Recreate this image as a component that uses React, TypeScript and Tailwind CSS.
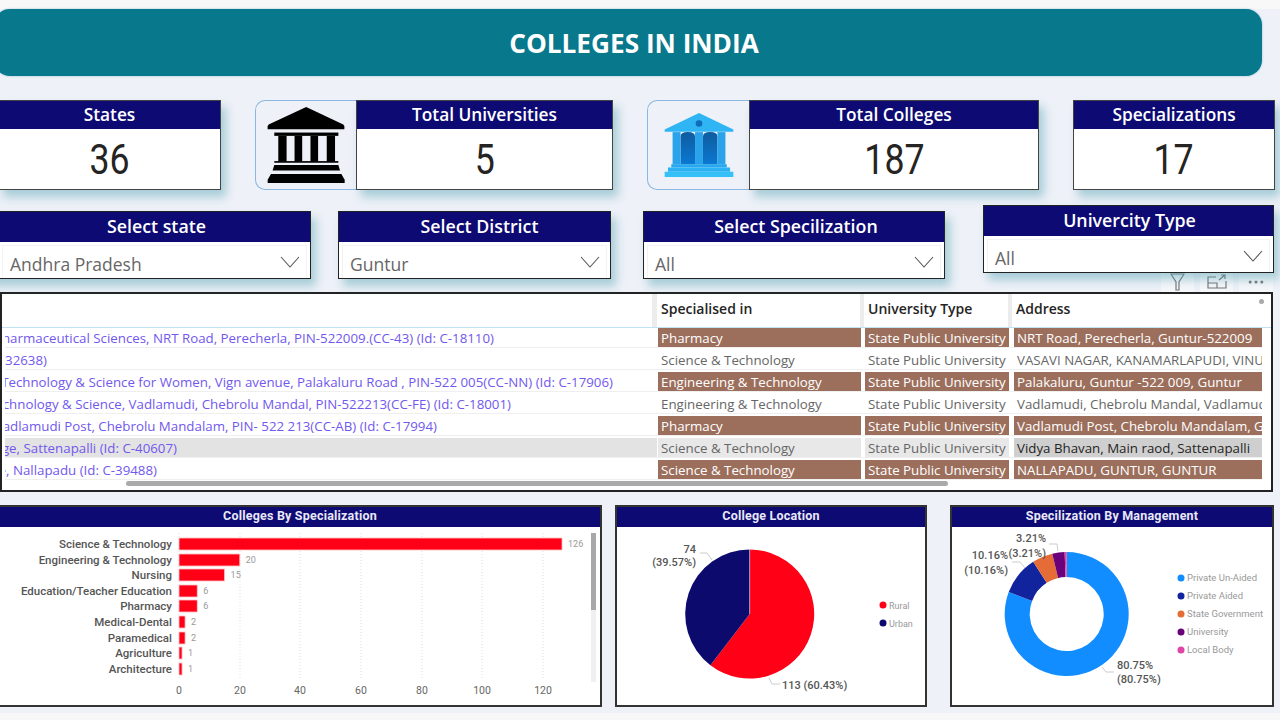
import { MoreHorizontal } from 'lucide-react';

const kpiShadow = 'shadow-[5px_7px_9px_rgba(80,160,175,0.45)]';

const rows = [
  { text: 'Pharmaceutical Sciences, NRT Road, Perecherla, PIN-522009.(CC-43) (Id: C-18110)', end: 'pr-[163px]', spec: 'Pharmacy', address: 'NRT Road, Perecherla, Guntur-522009', tone: 'brown' },
  { text: '(Id: C-32638)', end: 'pr-[610px]', spec: 'Science & Technology', address: 'VASAVI NAGAR, KANAMARLAPUDI, VINUKONDA', tone: 'plain' },
  { text: 'Technology & Science for Women, Vign avenue, Palakaluru Road , PIN-522 005(CC-NN) (Id: C-17906)', end: 'pr-[44px]', spec: 'Engineering & Technology', address: 'Palakaluru, Guntur -522 009, Guntur', tone: 'brown' },
  { text: 'Technology & Science, Vadlamudi, Chebrolu Mandal, PIN-522213(CC-FE) (Id: C-18001)', end: 'pr-[146px]', spec: 'Engineering & Technology', address: 'Vadlamudi, Chebrolu Mandal, Vadlamudi', tone: 'plain' },
  { text: 'Vadlamudi Post, Chebrolu Mandalam, PIN- 522 213(CC-AB) (Id: C-17994)', end: 'pr-[220px]', spec: 'Pharmacy', address: 'Vadlamudi Post, Chebrolu Mandalam, Guntur', tone: 'brown' },
  { text: 'College, Sattenapalli (Id: C-40607)', end: 'pr-[480px]', spec: 'Science & Technology', address: 'Vidya Bhavan, Main raod, Sattenapalli', tone: 'hover' },
  { text: 'College, Nallapadu (Id: C-39488)', end: 'pr-[500px]', spec: 'Science & Technology', address: 'NALLAPADU, GUNTUR, GUNTUR', tone: 'brown' },
];

const bars = [
  { name: 'Science & Technology', value: 126, y: 544 },
  { name: 'Engineering & Technology', value: 20, y: 560 },
  { name: 'Nursing', value: 15, y: 575 },
  { name: 'Education/Teacher Education', value: 6, y: 591 },
  { name: 'Pharmacy', value: 6, y: 606 },
  { name: 'Medical-Dental', value: 2, y: 622 },
  { name: 'Paramedical', value: 2, y: 638 },
  { name: 'Agriculture', value: 1, y: 653 },
  { name: 'Architecture', value: 1, y: 669 },
];

// slice path, angles in percent going clockwise from the top
function slice(cx: number, cy: number, r: number, inner: number, from: number, to: number) {
  const pt = (rad: number, p: number) => {
    const a = (p / 100) * Math.PI * 2;
    return `${(cx + rad * Math.sin(a)).toFixed(2)} ${(cy - rad * Math.cos(a)).toFixed(2)}`;
  };
  const large = to - from > 50 ? 1 : 0;
  if (inner === 0) return `M${cx} ${cy} L${pt(r, from)} A${r} ${r} 0 ${large} 1 ${pt(r, to)} Z`;
  return `M${pt(r, from)} A${r} ${r} 0 ${large} 1 ${pt(r, to)} L${pt(inner, to)} A${inner} ${inner} 0 ${large} 0 ${pt(inner, from)} Z`;
}

function Kpi({ title, value, className }: { title: string; value: string; className: string }) {
  return (
    <div className={`flex flex-col border-[1.5px] border-[#444] bg-white ${kpiShadow} ${className}`}>
      <div className="h-[28px] bg-[#0d0a73] text-center text-[17.3px] font-semibold leading-[27px] text-white">{title}</div>
      <div className="h-[59px] pt-[3px] text-center font-['Roboto',sans-serif] text-[42px] leading-[56px] text-[#252423]">
        <span className="inline-block scale-x-[0.85]">{value}</span>
      </div>
    </div>
  );
}

function Slicer({ title, value, className, titleClass }: { title: string; value: string; className: string; titleClass: string }) {
  return (
    <div className={`relative z-10 flex h-[68px] flex-col border-[1.5px] border-[#222] bg-white ${kpiShadow} ${className}`}>
      <div className={`h-[30px] bg-[#0d0a73] text-center text-[17.8px] font-semibold leading-[29px] text-white ${titleClass}`}>{title}</div>
      <div className="m-[3px] mb-0 flex flex-1 items-center justify-between border border-b-0 border-[#f3f3f3] pl-[7px] pr-[6px]">
        <span className="mt-[4px] text-[17.5px] leading-[24px] text-[#666]">{value}</span>
        <svg width="20" height="12" viewBox="0 0 20 12" fill="none" stroke="#555" strokeWidth="1.1">
          <polyline points="1,1 10,11 19,1" />
        </svg>
      </div>
    </div>
  );
}

function BankIcon() {
  return (
    <svg width="78" height="78" viewBox="50 30 235 235" fill="#000">
      <path d="M168 33 L280 86 Q285 90 283 100 L52 100 Q50 90 55 86 Z" />
      <rect x="72" y="110" width="193" height="10" />
      <rect x="84" y="120" width="25" height="78" />
      <rect x="133" y="120" width="23" height="78" />
      <rect x="181" y="120" width="23" height="78" />
      <rect x="230" y="120" width="25" height="78" />
      <rect x="72" y="196" width="193" height="5" />
      <path d="M72 208 L265 208 L270 224 L67 224 Z" />
      <path d="M62 235 L274 235 L284 252 L284 262 L52 262 L52 252 Z" />
    </svg>
  );
}

function CollegeIcon() {
  return (
    <svg width="70" height="66" viewBox="66 48 212 198">
      <defs>
        <linearGradient id="door" x1="0" y1="0" x2="0" y2="1">
          <stop offset="0" stopColor="#0f5c9e" />
          <stop offset="1" stopColor="#0a78d2" />
        </linearGradient>
      </defs>
      <path d="M172 50 L276 100 L276 107 L68 107 L68 100 Z" fill="#2fb4f4" />
      <circle cx="172" cy="82" r="10" fill="#0f6cb8" />
      <path d="M116 205 L116 122 Q116 108 138 108 Q160 108 160 122 L160 205 Z" fill="url(#door)" />
      <path d="M184 205 L184 122 Q184 108 206 108 Q228 108 228 122 L228 205 Z" fill="url(#door)" />
      <rect x="92" y="108" width="24" height="97" fill="#2ba3ea" />
      <rect x="160" y="108" width="24" height="97" fill="#2ba3ea" />
      <rect x="228" y="108" width="24" height="97" fill="#2ba3ea" />
      <rect x="88" y="205" width="168" height="10" fill="#28a8ee" />
      <rect x="78" y="215" width="188" height="13" fill="#2cb2f2" />
      <rect x="68" y="228" width="208" height="16" fill="#35c0f8" />
    </svg>
  );
}

function ChartCard({ title, className, viewBox, width, children }: { title: string; className: string; viewBox: string; width: number; children: React.ReactNode }) {
  return (
    <div className={`flex h-[202px] flex-col border-2 border-[#333] bg-white ${className}`}>
      <div className="h-[20px] shrink-0 bg-[#0d0a73] text-center font-['Roboto',sans-serif] text-[12.5px] font-bold leading-[18px] tracking-[0.2px] text-[#e8e8f8]">{title}</div>
      <svg width={width} height="178" viewBox={viewBox} className="font-['Roboto',sans-serif]">
        {children}
      </svg>
    </div>
  );
}

export default function App() {
  return (
    <div className="flex h-[720px] w-[1280px] flex-col overflow-hidden bg-[#eef1f8] font-['Open_Sans',sans-serif]">
      <div className="h-[9px] bg-[#f8f8f8]" />

      {/* Title banner */}
      <div className="-ml-[6px] flex h-[67px] w-[1268px] shrink-0 items-center justify-center rounded-[16px] bg-[#08788c] shadow-[0_0_2px_rgba(60,140,180,0.6)]">
        <h1 className="ml-[12px] mt-[3px] text-[26.2px] font-bold text-white">COLLEGES IN INDIA</h1>
      </div>

      {/* KPI row */}
      <div className="mt-[24px] flex h-[90px] shrink-0">
        <Kpi title="States" value="36" className="-ml-[2px] w-[223px]" />
        <div className="ml-[34px] flex w-[101px] items-center justify-center rounded-l-[10px] border border-r-0 border-[#8ab8e2]">
          <BankIcon />
        </div>
        <Kpi title="Total Universities" value="5" className="w-[257px]" />
        <div className="ml-[34px] flex w-[102px] items-center justify-center rounded-l-[10px] border border-r-0 border-[#8ab8e2]">
          <CollegeIcon />
        </div>
        <Kpi title="Total Colleges" value="187" className="w-[290px]" />
        <Kpi title="Specializations" value="17" className="ml-[34px] w-[202px]" />
      </div>

      {/* Slicers */}
      <div className="mt-[15px] flex h-[74px] shrink-0 items-start">
        <Slicer title="Select state" value="Andhra Pradesh" className="-ml-[20px] mt-[6px] w-[331px] pl-[18px]" titleClass="pl-[4px]" />
        <Slicer title="Select District" value="Guntur" className="ml-[27px] mt-[6px] w-[273px]" titleClass="pl-[10px]" />
        <Slicer title="Select Specilization" value="All" className="ml-[32px] mt-[6px] w-[302px]" titleClass="pl-[4px]" />
        <Slicer title="Univercity Type" value="All" className="ml-[38px] w-[291px]" titleClass="pl-[2px]" />
      </div>

      {/* Table */}
      <div className="relative mt-[13px] h-[200px] w-[1273px] shrink-0 border-2 border-[#222] bg-white">
        <div className="absolute -top-[22px] -right-[2px] flex gap-[6px]">
          <div className="flex h-[20px] w-[33px] items-end justify-center bg-[#f6f7fb] pb-[1px]">
            <svg width="15" height="18" viewBox="0 0 15 18" fill="none" stroke="#777" strokeWidth="1.2">
              <path d="M1 1 L14 1 L9 9 L9 17 L6 17 L6 9 Z" />
            </svg>
          </div>
          <div className="flex h-[20px] w-[33px] items-end justify-center bg-[#f6f7fb] pb-[3px]">
            <svg width="20" height="15" viewBox="0 0 20 15" fill="none" stroke="#777" strokeWidth="1.2">
              <path d="M9 3 L1 3 L1 14 L19 14 L19 7 M1 9 L10 9 L10 14 M12 6 L18 1 M14 1 L18 1 L18 5" />
            </svg>
          </div>
          <div className="flex h-[20px] w-[34px] items-start justify-center bg-[#f6f7fb]">
            <MoreHorizontal className="h-[20px] w-[20px] text-[#777]" strokeWidth={1.6} />
          </div>
        </div>

        <div className="flex h-[34px] items-stretch border-b-[1.5px] border-[#bfe0f5] pr-[10px] text-[14px] font-semibold text-[#252423]">
          <div className="ml-[3px] w-[647px]" />
          <div className="w-[5px] bg-[#ececec]" />
          <div className="flex w-[203px] items-center pb-[4px] pl-[4px]">Specialised in</div>
          <div className="w-[4px] bg-[#ececec]" />
          <div className="flex w-[144px] items-center pb-[4px] pl-[4px]">University Type</div>
          <div className="w-[4px] bg-[#ececec]" />
          <div className="flex flex-1 items-center pb-[4px] pl-[4px]">Address</div>
        </div>
        <div className="absolute right-[7px] top-[5px] h-[5px] w-[5px] rounded-full bg-[#aaa]" />

        <div className="flex flex-col gap-[2px] pl-[3px] text-[13.3px] leading-[20px]">
          {rows.map((row) => (
            <div key={row.text} className="flex h-[20px] w-[1257px] border-b border-[#efefef]">
              <div className={`flex w-[652px] justify-end overflow-hidden whitespace-nowrap text-[#7158ee] ${row.end} ${row.tone === 'hover' ? 'bg-[#e3e3e3]' : ''}`}>
                {row.text}
              </div>
              <div className={`ml-[1px] w-[203px] overflow-hidden whitespace-nowrap pl-[3px] ${row.tone === 'brown' ? 'bg-[#9c6f5d] text-white' : row.tone === 'hover' ? 'bg-[#e8e8e8] text-[#666]' : 'text-[#666]'}`}>
                {row.spec}
              </div>
              <div className={`ml-[4px] w-[144px] overflow-hidden whitespace-nowrap pl-[3px] ${row.tone === 'brown' ? 'bg-[#9c6f5d] text-white' : row.tone === 'hover' ? 'bg-[#e8e8e8] text-[#666]' : 'text-[#666]'}`}>
                State Public University
              </div>
              <div className={`ml-[5px] w-[248px] overflow-hidden whitespace-nowrap pl-[3px] ${row.tone === 'brown' ? 'bg-[#9c6f5d] text-white' : row.tone === 'hover' ? 'bg-[#cfcfcf] text-[#252423]' : 'text-[#666]'}`}>
                {row.address}
              </div>
            </div>
          ))}
        </div>
        <div className="absolute bottom-[4px] left-[124px] h-[5px] w-[822px] rounded-full bg-[#aaa]" />
      </div>

      {/* Charts */}
      <div className="mt-[13px] flex h-[202px] shrink-0">
        <ChartCard title="Colleges By Specialization" className="-ml-[2px] w-[604px]" viewBox="0 527 600 178" width={600}>
          {[179, 240, 300, 361, 422, 482, 543].map((x) => (
            <line key={x} x1={x} x2={x} y1="533" y2="680" stroke="#ddd" strokeDasharray="1 2" />
          ))}
          {bars.map((b) => (
            <g key={b.name}>
              <text x="172" y={b.y + 4} textAnchor="end" fontSize="11.5" fontWeight="500" fill="#555">{b.name}</text>
              <rect x="179" y={b.y - 6} width={b.value * 3.04} height="12" fill="#ff0016" stroke="#ffc4c8" strokeWidth="0.8" />
              <text x={179 + b.value * 3.04 + 6} y={b.y + 3} fontSize="9" fill="#999">{b.value}</text>
            </g>
          ))}
          {[0, 20, 40, 60, 80, 100, 120].map((t, i) => (
            <text key={t} x={[179, 240, 300, 361, 422, 482, 543][i]} y="694" textAnchor="middle" fontSize="10.5" fill="#666">{t}</text>
          ))}
          <rect x="591" y="533" width="5" height="149" fill="#f0f0f0" />
          <rect x="591" y="533" width="5" height="77" fill="#a8a8a8" />
        </ChartCard>

        <ChartCard title="College Location" className="ml-[13px] w-[312px]" viewBox="617 527 308 178" width={308}>
          <path d={slice(749.7, 614, 64.5, 0, 0, 60.43)} fill="#ff0016" />
          <path d={slice(749.7, 614, 64.5, 0, 60.43, 100)} fill="#0d0a6e" />
          <line x1="749.7" y1="549" x2="749.7" y2="614" stroke="#fff" strokeWidth="0.5" />
          <polyline points="700,553 707,553 712,560" fill="none" stroke="#ccc" />
          <polyline points="769,678 772,684 780,684" fill="none" stroke="#ccc" />
          <text x="696" y="553" textAnchor="end" fontSize="11" fontWeight="500" fill="#555">74</text>
          <text x="696" y="566" textAnchor="end" fontSize="11" fontWeight="500" fill="#555">(39.57%)</text>
          <text x="782" y="689" fontSize="11" fontWeight="500" fill="#555">113 (60.43%)</text>
          <circle cx="883" cy="605" r="3.5" fill="#ff0016" />
          <text x="889" y="609" fontSize="9" fill="#999">Rural</text>
          <circle cx="883" cy="623" r="3.5" fill="#0d0a6e" />
          <text x="889" y="627" fontSize="9" fill="#999">Urban</text>
        </ChartCard>

        <ChartCard title="Specilization By Management" className="ml-[23px] w-[324px]" viewBox="952 527 320 178" width={320}>
          <path d={slice(1066.7, 614, 62, 37, 0, 80.75)} fill="#118dff" />
          <path d={slice(1066.7, 614, 62, 37, 80.75, 90.91)} fill="#12239e" />
          <path d={slice(1066.7, 614, 62, 37, 90.91, 96.26)} fill="#e66c37" />
          <path d={slice(1066.7, 614, 62, 37, 96.26, 99.47)} fill="#6b007b" />
          <path d={slice(1066.7, 614, 62, 37, 99.47, 100)} fill="#e044a7" />
          <polyline points="1012,562 1020,562 1025,568" fill="none" stroke="#ccc" />
          <polyline points="1049,544 1057,544 1058,551" fill="none" stroke="#ccc" />
          <polyline points="1102,667 1106,672 1114,672" fill="none" stroke="#ccc" />
          <text x="1046" y="542" textAnchor="end" fontSize="11" fontWeight="500" fill="#555">3.21%</text>
          <text x="1046" y="557" textAnchor="end" fontSize="11" fontWeight="500" fill="#555">(3.21%)</text>
          <text x="1008" y="559" textAnchor="end" fontSize="11" fontWeight="500" fill="#555">10.16%</text>
          <text x="1008" y="574" textAnchor="end" fontSize="11" fontWeight="500" fill="#555">(10.16%)</text>
          <text x="1117" y="669" fontSize="11" fontWeight="500" fill="#555">80.75%</text>
          <text x="1117" y="683" fontSize="11" fontWeight="500" fill="#555">(80.75%)</text>
          {[
            { name: 'Private Un-Aided', color: '#118dff', y: 578 },
            { name: 'Private Aided', color: '#12239e', y: 596 },
            { name: 'State Government', color: '#e66c37', y: 614 },
            { name: 'University', color: '#6b007b', y: 632 },
            { name: 'Local Body', color: '#e044a7', y: 650 },
          ].map((l) => (
            <g key={l.name}>
              <circle cx="1181" cy={l.y} r="3.5" fill={l.color} />
              <text x="1187" y={l.y + 3} fontSize="9.5" fill="#999">{l.name}</text>
            </g>
          ))}
        </ChartCard>
      </div>

      <div className="mt-[6px] flex-1 bg-[#f7f7f7]" />
    </div>
  );
}
